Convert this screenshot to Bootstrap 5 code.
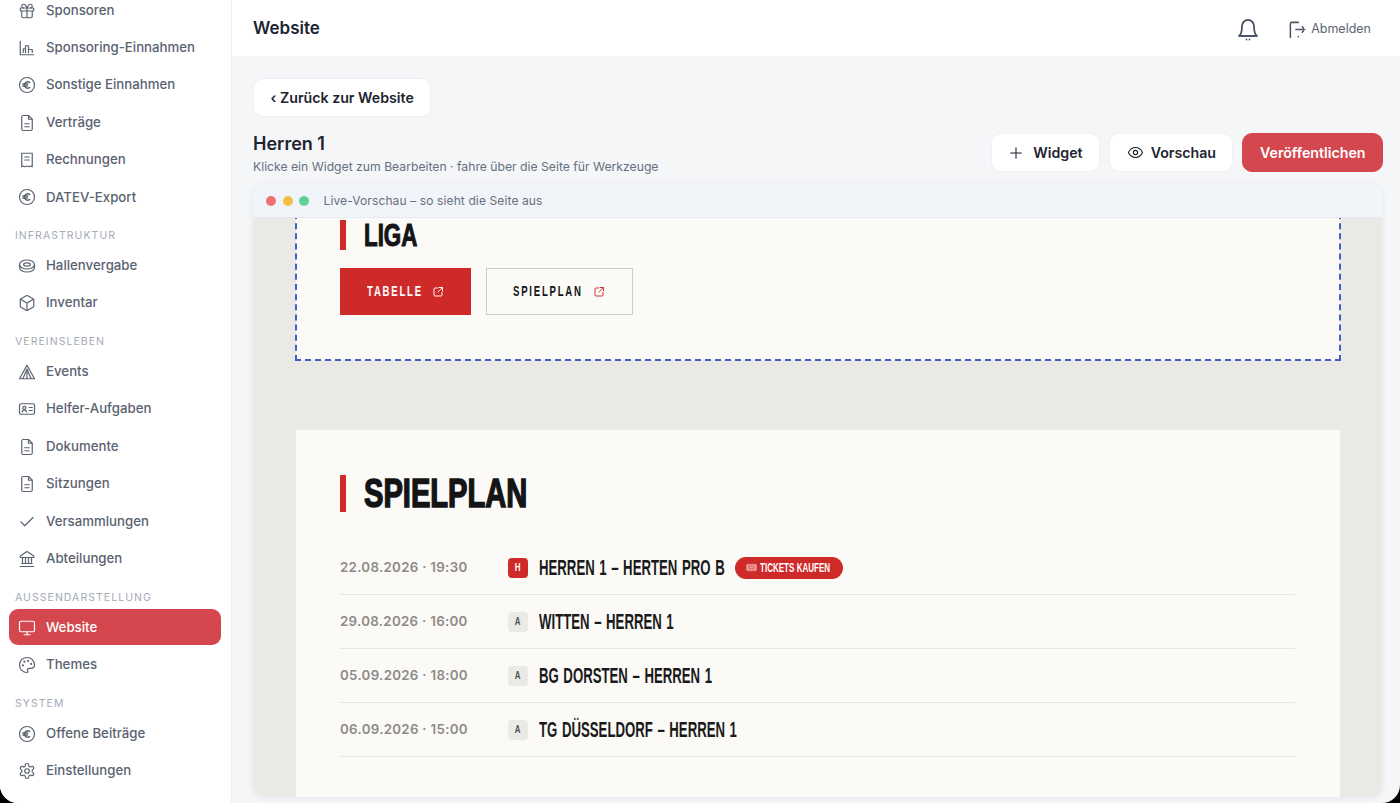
<!DOCTYPE html>
<html lang="de">
<head>
  <meta charset="UTF-8" />
  <meta name="viewport" content="width=device-width, initial-scale=1" />
  <title>Website</title>
  <link href="https://cdn.jsdelivr.net/npm/bootstrap@5.3.0/dist/css/bootstrap.min.css" rel="stylesheet">
  <style>
    html, body { height: 100%; }
    body { background: #000; font-family: Inter, "Liberation Sans", sans-serif; overflow: hidden; }
    svg.ic { fill: none; stroke: currentColor; stroke-width: 1.6; stroke-linecap: round; stroke-linejoin: round; flex: none; }

    .app-shell { height: 803px; background: #f4f6f8; border-radius: 0 0 18px 18px; overflow: hidden; }

    .side { width: 232px; background: #fff; border-right: 1px solid #eceef2; overflow: hidden; flex: none; }
    .side-list { margin-top: -8px; padding: 0 10px 0 9px; }
    .side-link { height: 36px; margin-bottom: 1.4px; padding: 1px 0 0 9px; gap: 10px; color: #5a6270; font-size: 13.25px; font-weight: 500; border-radius: 9px; text-decoration: none; }
    .side-link svg { width: 18px; height: 18px; stroke-width: 1.6; }
    .side-link.on { background: #d4474e; color: #fff; }
    .side-head { padding: 13px 0 4.2px 6px; font-size: 10.5px; line-height: 14px; letter-spacing: 1.05px; color: #a5abb6; }

    .top-bar { height: 56px; background: #fff; padding: 2px 29px 0 21px; flex: none; }
    .top-title { font-size: 17px; font-weight: 600; color: #1d2330; }
    .top-out { font-size: 12.5px; color: #5b6472; gap: 4px; margin-left: 28px; }

    .work { padding: 22px 17px 6px 21px; min-height: 0; }
    .soft-btn { background: #fff; border: 1px solid #edf0f4; border-radius: 10px; color: #1d2330; font-size: 14.2px; font-weight: 600; height: 39px; padding: 0 16.5px; display: inline-flex; align-items: center; }
    .soft-btn:hover { background: #fff; }
    .pub-btn { background: #d4474e; border-color: #d4474e; color: #fff; }
    .pub-btn:hover { background: #d4474e; border-color: #d4474e; color: #fff; }
    .page-name { font-size: 18px; font-weight: 600; color: #1d2330; line-height: 22px; }
    .page-hint { font-size: 12.2px; color: #667080; line-height: 16px; margin-top: 4px; }
    .head-row { margin-top: 16px; height: 39px; }
    .head-text { margin-top: 2px; }

    .frame { margin-top: 12px; margin-right: 1px; border-radius: 12px; overflow: hidden; background: #eae9e6; box-shadow: 0 1px 6px rgba(30, 40, 60, .07); min-height: 0; }
    .frame-bar { height: 34px; background: #f1f4f8; border-bottom: 1px solid #e6e9ee; padding-left: 13px; font-size: 12px; color: #667080; flex: none; letter-spacing: .12px; }
    .dot { width: 10px; height: 10px; border-radius: 50%; margin-right: 6.5px; }
    .canvas { padding: 0 42px 0 43px; overflow: hidden; min-height: 0; }
    .sheet { background: #fbfaf6; padding-left: 44px; padding-right: 45px; }
    .sheet-edit { outline: 2px dashed #3f5fc9; outline-offset: -1px; height: 146px; margin-top: -4px; padding-top: 6px; margin-bottom: 70px; }
    .sheet-plan { padding-top: 45px; height: 400px; }

    /* no condensed family installed, so the poster type is narrowed by hand */
    .cond { font-family: "Liberation Sans", sans-serif; }
    .squeeze { display: inline-block; white-space: nowrap; transform-origin: left center; }

    .sec-title { border-left: 6px solid #cf2a2a; padding-left: 18px; color: #141416; font-weight: 700; line-height: 1; display: flex; align-items: center; }
    .t-small { font-size: 31px; height: 30px; -webkit-text-stroke: 1.1px #141416; }
    .t-small .squeeze { transform: scaleX(.72); }
    .t-big { font-size: 41px; height: 37px; margin-bottom: 29px; -webkit-text-stroke: 1.6px #141416; }
    .t-big .squeeze { transform: scaleX(.71); }

    .cta { height: 47px; border-radius: 0; font-size: 14.5px; font-weight: 700; letter-spacing: 2.7px; gap: 11px; padding: 0 0 0 27px; justify-content: flex-start; }
    .cta .squeeze { transform: scaleX(.66); }
    .cta svg { width: 12px; height: 12px; stroke-width: 1.9; }
    .cta-red, .cta-red:hover { width: 131px; background: #cf2a2a; border: 0; color: #fff; }
    .cta-line, .cta-line:hover { width: 147px; background: transparent; border: 1px solid #cfcdc8; color: #141416; padding-left: 26px; }
    .cta-line svg { color: #cf2a2a; }
    .cta-row { gap: 15px; margin-top: 18px; }

    .game { height: 54px; border-bottom: 1px solid #e8e6e1; }
    .game-date { width: 168px; font-size: 13.3px; font-weight: 600; color: #8c8b86; letter-spacing: .3px; }
    .chip { width: 20px; height: 20px; border-radius: 4px; background: #eceae7; color: #55534f; font-size: 10px; font-weight: 700; margin-right: 11px; }
    .chip span { transform: scaleX(.8); }
    .chip-h { background: #cf2a2a; color: #fff; }
    .game-name { font-size: 22px; font-weight: 700; color: #1a1a1c; width: 185px; flex: none; word-spacing: 1.5px; }
    .game-name .squeeze { transform: scaleX(.6); }
    .ticket { height: 22px; width: 108px; margin-left: 11px; background: #cf2a2a; color: #fff; border-radius: 11px; font-size: 12px; font-weight: 700; gap: 3px; padding-left: 11px; }
    .ticket .squeeze { transform: scaleX(.67); }
    .ticket svg { width: 11px; height: 11px; color: #ef9a9a; stroke-width: 1; }
  </style>
</head>
<body>
  <svg width="0" height="0" class="position-absolute">
    <symbol id="i-gift" viewBox="0 0 24 24"><rect x="3" y="8" width="18" height="4" rx="1"/><path d="M12 8v13M19 12v7a2 2 0 0 1-2 2H7a2 2 0 0 1-2-2v-7M7.500 8a2.500 2.500 0 0 1 0-5C10 3 12 8 12 8s2-5 4.500-5a2.500 2.500 0 0 1 0 5"/></symbol>
    <symbol id="i-bars" viewBox="0 0 24 24"><path d="M3 3v18h18M7 18v-5h3v5M10 18V9h4v9M14 18v-4h5v4"/></symbol>
    <symbol id="i-euro" viewBox="0 0 24 24"><circle cx="12" cy="12" r="10"/><path d="M15.500 8.500a4.500 4.500 0 0 0-7 3.500 4.500 4.500 0 0 0 7 3.500M6.500 10.700h6.500M6.500 13.300h6" stroke-width="2"/></symbol>
    <symbol id="i-file" viewBox="0 0 24 24"><path d="M14 2H7a2 2 0 0 0-2 2v16a2 2 0 0 0 2 2h10a2 2 0 0 0 2-2V7z"/><path d="M14 2v5h5M9 13h6M9 17h6"/></symbol>
    <symbol id="i-receipt" viewBox="0 0 24 24"><path d="M5 3h14v18l-2-1-2 1-3-1-3 1-2-1-2 1z"/><path d="M9 8h6M9 12h6"/></symbol>
    <symbol id="i-disc" viewBox="0 0 24 24"><ellipse cx="12" cy="10" rx="10" ry="6"/><ellipse cx="12" cy="10" rx="4.500" ry="2.200"/><path d="M2 10v4c0 3.300 4.500 6 10 6s10-2.700 10-6v-4"/></symbol>
    <symbol id="i-box" viewBox="0 0 24 24"><path d="M21 8a2 2 0 0 0-1-1.700l-7-4a2 2 0 0 0-2 0l-7 4A2 2 0 0 0 3 8v8a2 2 0 0 0 1 1.700l7 4a2 2 0 0 0 2 0l7-4a2 2 0 0 0 1-1.700z"/><path d="M3.300 7 12 12l8.700-5M12 22V12"/></symbol>
    <symbol id="i-tent" viewBox="0 0 24 24"><path d="M12 3 2 21h20zM12 8 6.500 21M12 8l5.500 13M12 12v9"/></symbol>
    <symbol id="i-card" viewBox="0 0 24 24"><rect x="2" y="5" width="20" height="14" rx="2"/><circle cx="8.500" cy="10.500" r="2"/><path d="M5.500 16c.5-2 1.500-2.500 3-2.500s2.500.5 3 2.500M15 10h4M15 14h4"/></symbol>
    <symbol id="i-check" viewBox="0 0 24 24"><path d="M20 6 9 17l-5-5"/></symbol>
    <symbol id="i-bank" viewBox="0 0 24 24"><path d="M3 22h18M5 18h14M6 18v-7M10 18v-7M14 18v-7M18 18v-7M12 2l9 6v2H3V8z"/></symbol>
    <symbol id="i-screen" viewBox="0 0 24 24"><rect x="2" y="3" width="20" height="14" rx="2"/><path d="M8 21h8M12 17v4"/></symbol>
    <symbol id="i-palette" viewBox="0 0 24 24"><path d="M12 22a10 10 0 1 1 10-10c0 3-2.500 4.500-5 4.500h-2.500a2 2 0 0 0-1.500 3.300c.6.8.3 2.200-1 2.200z"/><circle cx="13.500" cy="6.500" r=".6"/><circle cx="17.500" cy="10.500" r=".6"/><circle cx="8.500" cy="7.500" r=".6"/><circle cx="6.500" cy="12.500" r=".6"/></symbol>
    <symbol id="i-gear" viewBox="0 0 24 24"><path d="M12.200 2h-.4a2 2 0 0 0-2 2v.2a2 2 0 0 1-1 1.700l-.4.300a2 2 0 0 1-2 0l-.2-.1a2 2 0 0 0-2.700.7l-.2.400a2 2 0 0 0 .7 2.700l.2.100a2 2 0 0 1 1 1.700v.6a2 2 0 0 1-1 1.700l-.2.100a2 2 0 0 0-.7 2.700l.2.400a2 2 0 0 0 2.700.7l.2-.1a2 2 0 0 1 2 0l.4.300a2 2 0 0 1 1 1.700v.2a2 2 0 0 0 2 2h.4a2 2 0 0 0 2-2v-.2a2 2 0 0 1 1-1.700l.4-.3a2 2 0 0 1 2 0l.2.100a2 2 0 0 0 2.700-.7l.2-.4a2 2 0 0 0-.7-2.700l-.2-.1a2 2 0 0 1-1-1.700v-.6a2 2 0 0 1 1-1.700l.2-.1a2 2 0 0 0 .7-2.700l-.2-.4a2 2 0 0 0-2.700-.7l-.2.100a2 2 0 0 1-2 0l-.4-.3a2 2 0 0 1-1-1.700V4a2 2 0 0 0-2-2z"/><circle cx="12" cy="12" r="3"/></symbol>
    <symbol id="i-bell" viewBox="0 0 24 24"><path d="M6 9a6 6 0 0 1 12 0c0 6 1 8.500 3 10H3c2-1.500 3-4 3-10z"/><path d="M10.500 22.500h.01M13.500 22.500h.01"/></symbol>
    <symbol id="i-out" viewBox="0 0 24 24"><path d="M3 22V5a2 2 0 0 1 2-2h8M10 12h11M18 8.500l1.500 1.500M19.500 14l-1.500 1.500M13 21h.01"/></symbol>
    <symbol id="i-plus" viewBox="0 0 24 24"><path d="M12 4v16M4 12h16"/></symbol>
    <symbol id="i-eye" viewBox="0 0 24 24"><path d="M2 12s3.500-7 10-7 10 7 10 7-3.500 7-10 7-10-7-10-7z"/><circle cx="12" cy="12" r="3"/></symbol>
    <symbol id="i-ext" viewBox="0 0 24 24"><path d="M11 4H6a2 2 0 0 0-2 2v12a2 2 0 0 0 2 2h12a2 2 0 0 0 2-2v-5M14 3h7v7M21 3l-9 9"/></symbol>
    <symbol id="i-ticket" viewBox="0 0 24 24"><rect x="1" y="5" width="22" height="14" rx="2" fill="currentColor"/><rect x="7" y="9" width="10" height="6" stroke="#cf2a2a"/></symbol>
  </svg>

  <div class="app-shell d-flex">
    <aside class="side">
      <nav class="side-list d-flex flex-column">
        <a class="side-link d-flex align-items-center" href="#"><svg class="ic"><use href="#i-gift"/></svg>Sponsoren</a>
        <a class="side-link d-flex align-items-center" href="#"><svg class="ic"><use href="#i-bars"/></svg>Sponsoring-Einnahmen</a>
        <a class="side-link d-flex align-items-center" href="#"><svg class="ic"><use href="#i-euro"/></svg>Sonstige Einnahmen</a>
        <a class="side-link d-flex align-items-center" href="#"><svg class="ic"><use href="#i-file"/></svg>Verträge</a>
        <a class="side-link d-flex align-items-center" href="#"><svg class="ic"><use href="#i-receipt"/></svg>Rechnungen</a>
        <a class="side-link d-flex align-items-center" href="#"><svg class="ic"><use href="#i-euro"/></svg>DATEV-Export</a>
        <div class="side-head">INFRASTRUKTUR</div>
        <a class="side-link d-flex align-items-center" href="#"><svg class="ic"><use href="#i-disc"/></svg>Hallenvergabe</a>
        <a class="side-link d-flex align-items-center" href="#"><svg class="ic"><use href="#i-box"/></svg>Inventar</a>
        <div class="side-head">VEREINSLEBEN</div>
        <a class="side-link d-flex align-items-center" href="#"><svg class="ic"><use href="#i-tent"/></svg>Events</a>
        <a class="side-link d-flex align-items-center" href="#"><svg class="ic"><use href="#i-card"/></svg>Helfer-Aufgaben</a>
        <a class="side-link d-flex align-items-center" href="#"><svg class="ic"><use href="#i-file"/></svg>Dokumente</a>
        <a class="side-link d-flex align-items-center" href="#"><svg class="ic"><use href="#i-file"/></svg>Sitzungen</a>
        <a class="side-link d-flex align-items-center" href="#"><svg class="ic"><use href="#i-check"/></svg>Versammlungen</a>
        <a class="side-link d-flex align-items-center" href="#"><svg class="ic"><use href="#i-bank"/></svg>Abteilungen</a>
        <div class="side-head">AUSSENDARSTELLUNG</div>
        <a class="side-link on d-flex align-items-center" href="#"><svg class="ic"><use href="#i-screen"/></svg>Website</a>
        <a class="side-link d-flex align-items-center" href="#"><svg class="ic"><use href="#i-palette"/></svg>Themes</a>
        <div class="side-head">SYSTEM</div>
        <a class="side-link d-flex align-items-center" href="#"><svg class="ic"><use href="#i-euro"/></svg>Offene Beiträge</a>
        <a class="side-link d-flex align-items-center" href="#"><svg class="ic"><use href="#i-gear"/></svg>Einstellungen</a>
      </nav>
    </aside>

    <div class="flex-grow-1 d-flex flex-column" style="min-width:0">
      <header class="top-bar d-flex align-items-center">
        <div class="top-title me-auto">Website</div>
        <svg class="ic" width="24" height="26" style="color:#4c5565;stroke-width:1.8"><use href="#i-bell"/></svg>
        <div class="top-out d-flex align-items-center"><svg class="ic" width="19" height="19" style="color:#4c5565;stroke-width:1.9"><use href="#i-out"/></svg>Abmelden</div>
      </header>

      <main class="work flex-grow-1 d-flex flex-column">
        <div><button class="btn soft-btn">‹ Zurück zur Website</button></div>

        <div class="head-row d-flex justify-content-between align-items-center">
          <div class="head-text">
            <div class="page-name">Herren 1</div>
            <div class="page-hint">Klicke ein Widget zum Bearbeiten · fahre über die Seite für Werkzeuge</div>
          </div>
          <div class="d-flex" style="gap:9px">
            <button class="btn soft-btn" style="gap:9px"><svg class="ic" width="16" height="16"><use href="#i-plus"/></svg>Widget</button>
            <button class="btn soft-btn" style="gap:7px"><svg class="ic" width="17" height="17"><use href="#i-eye"/></svg>Vorschau</button>
            <button class="btn soft-btn pub-btn">Veröffentlichen</button>
          </div>
        </div>

        <section class="frame flex-grow-1 d-flex flex-column">
          <div class="frame-bar d-flex align-items-center">
            <span class="dot" style="background:#ec7272"></span>
            <span class="dot" style="background:#f2bf45"></span>
            <span class="dot" style="background:#63cf9b"></span>
            <span class="ms-2">Live-Vorschau – so sieht die Seite aus</span>
          </div>
          <div class="canvas flex-grow-1">
            <div class="sheet sheet-edit">
              <div class="sec-title t-small cond"><span class="squeeze">LIGA</span></div>
              <div class="d-flex cta-row">
                <a class="btn cta cta-red cond d-flex align-items-center" href="#"><span class="squeeze" style="width:54px">TABELLE</span><svg class="ic"><use href="#i-ext"/></svg></a>
                <a class="btn cta cta-line cond d-flex align-items-center" href="#"><span class="squeeze" style="width:69px">SPIELPLAN</span><svg class="ic"><use href="#i-ext"/></svg></a>
              </div>
            </div>
            <div class="sheet sheet-plan">
              <div class="sec-title t-big cond"><span class="squeeze">SPIELPLAN</span></div>
              <div class="game d-flex align-items-center">
                <div class="game-date">22.08.2026 · 19:30</div>
                <div class="chip chip-h cond d-flex align-items-center justify-content-center"><span>H</span></div>
                <div class="game-name cond"><span class="squeeze">HERREN 1 – HERTEN PRO B</span></div>
                <div class="ticket cond d-flex align-items-center"><svg class="ic"><use href="#i-ticket"/></svg><span class="squeeze">TICKETS KAUFEN</span></div>
              </div>
              <div class="game d-flex align-items-center">
                <div class="game-date">29.08.2026 · 16:00</div>
                <div class="chip cond d-flex align-items-center justify-content-center"><span>A</span></div>
                <div class="game-name cond"><span class="squeeze">WITTEN – HERREN 1</span></div>
              </div>
              <div class="game d-flex align-items-center">
                <div class="game-date">05.09.2026 · 18:00</div>
                <div class="chip cond d-flex align-items-center justify-content-center"><span>A</span></div>
                <div class="game-name cond"><span class="squeeze">BG DORSTEN – HERREN 1</span></div>
              </div>
              <div class="game d-flex align-items-center">
                <div class="game-date">06.09.2026 · 15:00</div>
                <div class="chip cond d-flex align-items-center justify-content-center"><span>A</span></div>
                <div class="game-name cond"><span class="squeeze">TG DÜSSELDORF – HERREN 1</span></div>
              </div>
            </div>
          </div>
        </section>
      </main>
    </div>
  </div>

  <script src="https://cdn.jsdelivr.net/npm/bootstrap@5.3.0/dist/js/bootstrap.bundle.min.js"></script>
</body>
</html>
